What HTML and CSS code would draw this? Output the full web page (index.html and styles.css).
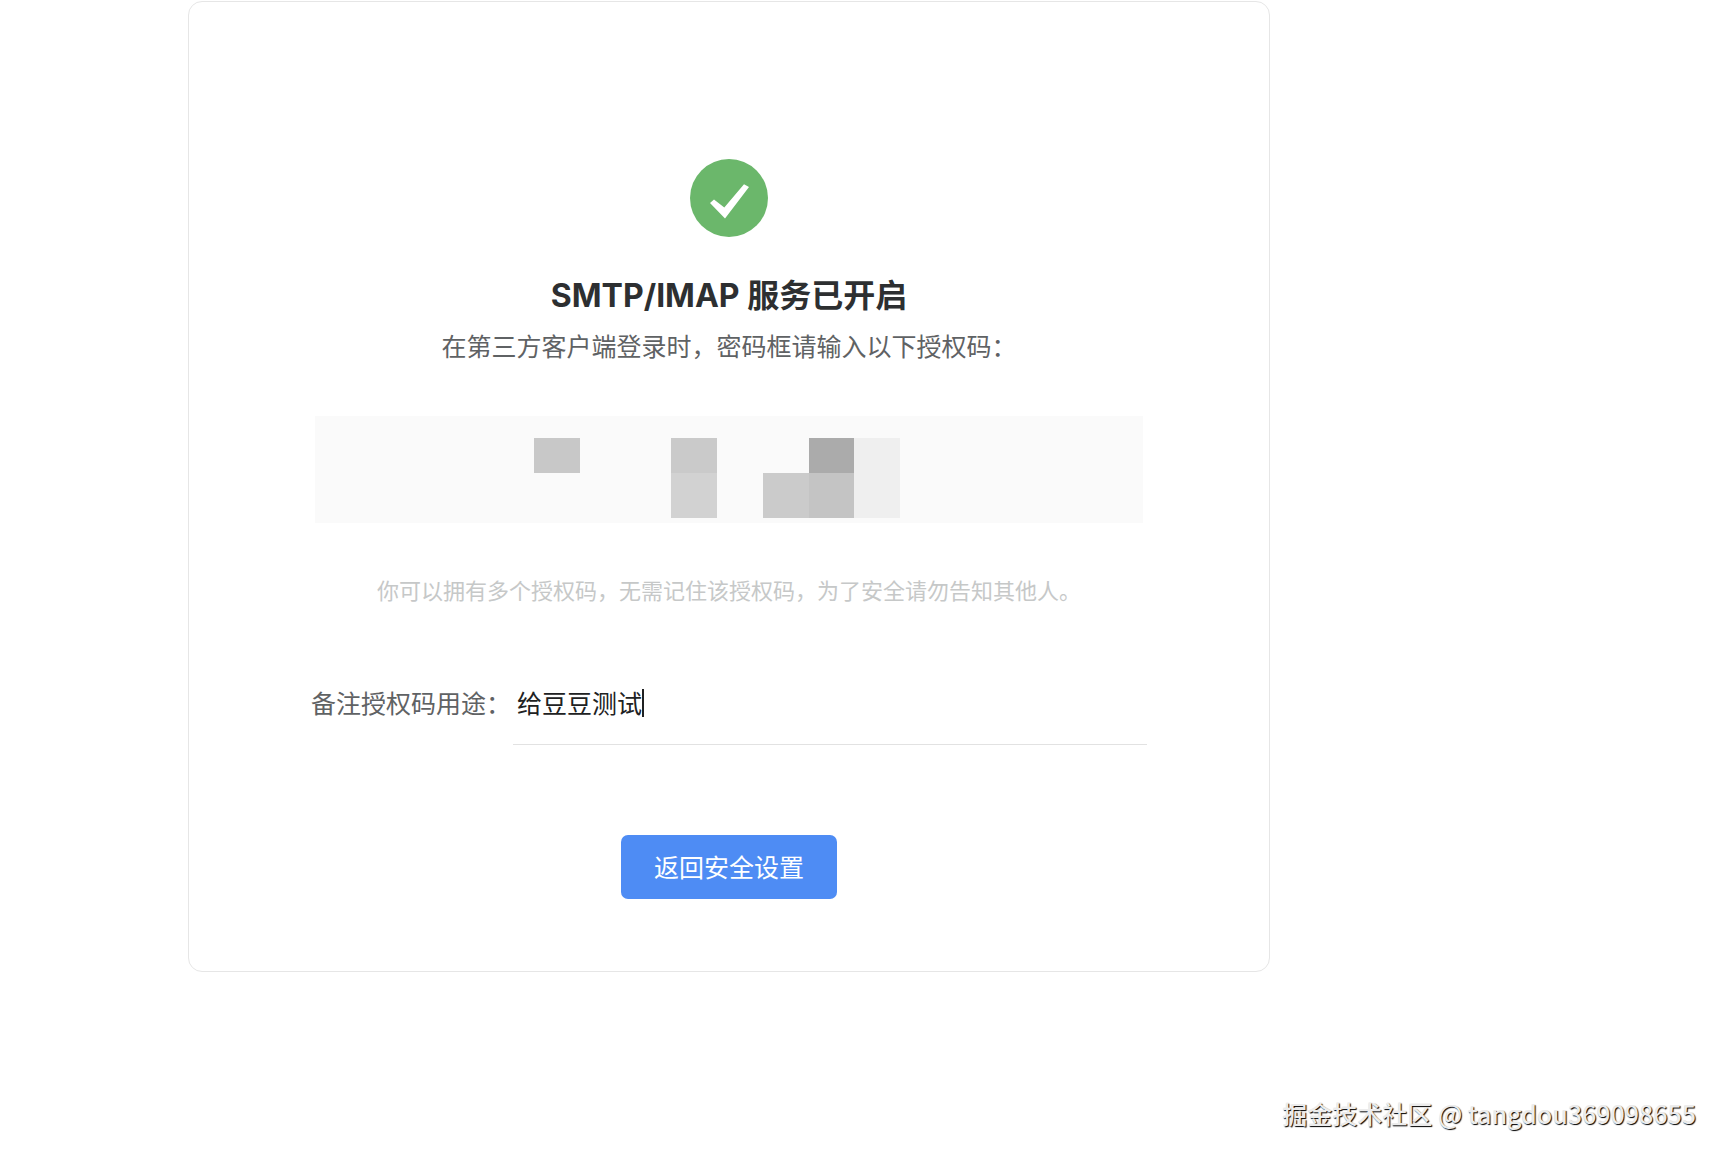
FILE: index.html
```html
<!DOCTYPE html>
<html lang="zh-CN">
<head>
<meta charset="utf-8">
<meta name="viewport" content="width=device-width, initial-scale=1">
<title>SMTP/IMAP 服务已开启</title>
<link rel="stylesheet" href="styles.css">
</head>
<body>
<main class="page">
  <section class="card">
    <svg class="success" viewBox="0 0 78 78" aria-hidden="true">
      <circle cx="39" cy="39" r="39" fill="#6bb76b"/>
      <path d="M20 44 L24 40.500 L34.300 48.500 L54 25.300 L59 28 L35 59.500 Z" fill="#fff"/>
    </svg>
    <h1 class="title">SMTP/IMAP 服务已开启</h1>
    <p class="subtitle">在第三方客户端登录时，密码框请输入以下授权码：</p>
    <div class="code">
      <svg class="mosaic" viewBox="0 0 366 80" role="img" aria-label="授权码已隐藏">
        <rect x="0" y="0" width="46" height="35" fill="#c8c8c8"/>
        <rect x="137" y="0" width="46" height="35" fill="#cacaca"/>
        <rect x="137" y="35" width="46" height="45" fill="#d2d2d2"/>
        <rect x="229" y="35" width="46" height="45" fill="#cbcbcb"/>
        <rect x="275" y="0" width="45" height="35" fill="#ababab"/>
        <rect x="275" y="35" width="45" height="45" fill="#c4c4c4"/>
        <rect x="320" y="0" width="46" height="80" fill="#efefef"/>
      </svg>
    </div>
    <p class="hint">你可以拥有多个授权码，无需记住该授权码，为了安全请勿告知其他人。</p>
    <form class="form">
      <div class="field">
        <label class="label" for="remark">备注授权码用途：</label>
        <div class="control">
          <input class="input" id="remark" type="text" value="给豆豆测试">
          <span class="caret"></span>
        </div>
      </div>
      <button class="button" type="button">返回安全设置</button>
    </form>
  </section>
</main>
<footer class="watermark">掘金技术社区 @ tangdou369098655</footer>
</body>
</html>
```

FILE: styles.css
```css
* {
  box-sizing: border-box;
}

body {
  margin: 0;
  background: #fff;
  color: #2d2f31;
  font-family: "Noto Sans CJK SC", sans-serif;
  font-size: 25px;
  line-height: 36px;
}

.page {
  padding: 1px 456px 0 188px;
}

.card {
  display: flex;
  flex-direction: column;
  align-items: center;
  padding: 157px 24px 72px;
  border: 1px solid #e6e6e6;
  border-radius: 14px;
}

.success {
  width: 78px;
  height: 78px;
}

.title {
  margin: 39px 0 0;
  font-family: Inter, "Noto Sans CJK SC", sans-serif;
  font-size: 32px;
  font-weight: 700;
  line-height: 40px;
}

.subtitle {
  margin: 11px 0 0;
  color: #5f6264;
}

.code {
  display: flex;
  justify-content: center;
  width: 100%;
  max-width: 828px;
  margin-top: 53px;
  padding: 22px 48px 5px 24px;
  background: #fafafa;
}

.mosaic {
  width: 366px;
  height: 80px;
}

.hint {
  margin: 50px 0 0;
  color: #c6c8c8;
  font-size: 22px;
  line-height: 32px;
}

.form {
  display: flex;
  flex-direction: column;
  align-items: center;
  width: 100%;
  max-width: 836px;
  margin-top: 54px;
}

.field {
  display: flex;
  align-items: center;
  width: 100%;
}

.label {
  color: #5f6264;
}

.control {
  position: relative;
  flex: 1;
  margin-left: 2px;
}

.input {
  display: block;
  width: 100%;
  height: 86px;
  padding: 0 4px;
  border: 0;
  border-bottom: 1px solid #e2e2e2;
  outline: 0;
  background: transparent;
  color: #202122;
  font: inherit;
}

.caret {
  position: absolute;
  top: 30px;
  left: 129px;
  width: 2px;
  height: 28px;
  background: #202122;
}

.button {
  min-width: 216px;
  height: 64px;
  margin-top: 90px;
  padding: 0 32px 2px;
  border: 0;
  border-radius: 7px;
  background: #4e8cf4;
  color: #fff;
  font: inherit;
}

.watermark {
  padding: 123px 30px 24px;
  color: #ececec;
  font-weight: 500;
  text-align: right;
  text-shadow: 1px 1px 1px #000;
}
```
